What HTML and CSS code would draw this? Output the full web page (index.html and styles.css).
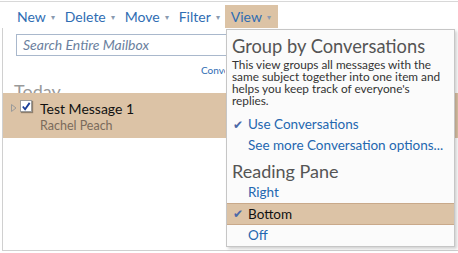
FILE: index.html
```html
<!DOCTYPE html>
<html>
<head>
<meta charset="utf-8">
<link rel="stylesheet" href="styles.css">
</head>
<body>
<div class="app">
  <div class="toolbar">
    <span class="tb">New<span class="caret">▾</span></span>
    <span class="tb">Delete<span class="caret">▾</span></span>
    <span class="tb">Move<span class="caret">▾</span></span>
    <span class="tb">Filter<span class="caret">▾</span></span>
    <span class="tb active">View<span class="caret">▾</span></span>
  </div>
  <div class="pane">
    <div class="search">Search Entire Mailbox</div>
    <div class="conv">Conversations by Date</div>
    <div class="group">Today</div>
    <div class="row">
      <svg class="tri" width="6" height="8" viewBox="0 0 6 8"><path d="M0.5 0.5 L5 4 L0.5 7.5 Z" fill="none" stroke="#9a9a9a" stroke-width="1"/></svg>
      <span class="chk"><svg width="11" height="11" viewBox="0 0 11 11"><path d="M2 5.5 L4.5 8.5 L9.5 1.5" fill="none" stroke="#1a3f9a" stroke-width="2"/></svg></span>
      <div class="msg">
        <div class="subj">Test Message 1</div>
        <div class="from">Rachel Peach</div>
      </div>
    </div>
  </div>
  <div class="menu">
    <div class="mh">Group by Conversations</div>
    <div class="desc">This view groups all messages with the<br>same subject together into one item and<br>helps you keep track of everyone's<br>replies.</div>
    <div class="mi first"><span class="ck">✔</span>Use Conversations</div>
    <div class="mi"><span class="ck"></span>See more Conversation options...</div>
    <div class="mh2">Reading Pane</div>
    <div class="mi"><span class="ck"></span>Right</div>
    <div class="mi sel"><span class="ck">✔</span>Bottom</div>
    <div class="mi"><span class="ck"></span>Off</div>
  </div>
</div>
</body>
</html>
```
FILE: styles.css
```css
html, body { margin: 0; padding: 0; background: #fff; }
body { font-family: "Lato", "Open Sans", sans-serif; width: 458px; height: 253px; overflow: hidden; }
.app { position: relative; width: 458px; height: 253px; border-top: 1px solid #d8d8d8; margin-top: 1px; box-sizing: border-box; }
.toolbar { display: flex; align-items: center; height: 26px; padding: 3px 0 0 17px; box-sizing: border-box; }
.tb { color: #2f6db3; font-size: 14px; margin-right: 10px; display: flex; align-items: center; height: 23px; }
.caret { font-size: 8px; color: #8a9ab0; margin-left: 5px; }
.tb.active { background: #dcc3a5; padding: 0 7px 0 6px; margin-left: -5px; }
.pane { margin-left: 2px; border-left: 1px solid #d0d0d0; border-bottom: 1px solid #d0d0d0; height: 223px; box-sizing: border-box; padding-top: 6px; }
.search { margin-left: 13px; width: 240px; height: 22px; border: 1px solid #a9b8cc; box-sizing: border-box; font-style: italic; color: #6b7f9e; font-size: 14px; padding-left: 6px; line-height: 20px; }
.conv { margin-left: 198px; margin-top: 8px; width: 24px; overflow: hidden; font-size: 10px; color: #2f6db3; height: 12px; line-height: 12px; white-space: nowrap; }
.group { margin-left: 11px; margin-top: 3px; font-size: 18px; color: #9a9a9a; height: 14px; line-height: 24px; overflow: visible; }
.row { position: relative; background: #dcc3a6; height: 45px; display: flex; align-items: flex-start; padding-left: 8px; box-sizing: border-box; }
.tri { margin-top: 11px; margin-right: 3px; }
.chk { width: 12px; height: 12px; background: #fff; border: 1px solid #9b9b9b; box-shadow: 1px 1px 1px rgba(0,0,0,.35); margin-top: 7px; display: flex; align-items: center; justify-content: center; box-sizing: border-box; }
.msg { margin-left: 8px; margin-top: 7px; }
.subj { font-size: 14px; color: #111; line-height: 17px; }
.from { font-size: 12.5px; color: #7b6b5c; line-height: 17px; }
.menu { position: absolute; left: 226px; top: 27px; width: 229px; height: 218px; background: #fbfbfb; border: 1px solid #c6c6c6; box-sizing: border-box; box-shadow: 2px 2px 3px rgba(0,0,0,.18); padding: 4px 0 0 0; }
.mh { font-size: 18.3px; color: #555; margin-left: 5px; line-height: 24px; white-space: nowrap; }
.desc { font-size: 11.8px; color: #333; margin-left: 5px; line-height: 12px; margin-top: 1px; white-space: nowrap; }
.mi { font-size: 13.5px; color: #2467b0; height: 21px; line-height: 21px; display: flex; white-space: nowrap; }
.mi.first { margin-top: 7px; }
.ck { width: 21px; text-align: center; color: #4a68a8; font-size: 12px; }
.mh2 { font-size: 18px; color: #555; margin-left: 5px; line-height: 22px; margin-top: 4px; }
.mi.sel { background: #dcc3a6; color: #111; border-top: 1px solid #c9a98a; border-bottom: 1px solid #c9a98a; height: 20px; line-height: 20px; }
```
